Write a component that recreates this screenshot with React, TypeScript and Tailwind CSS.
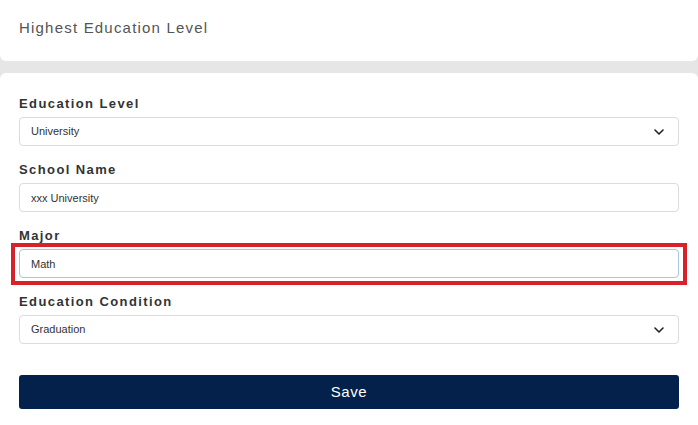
import { useState } from "react";

const levels = ["University", "High School", "Master", "Doctorate"];
const conditions = ["Graduation", "In School", "Dropped Out"];

function Chevron() {
  return (
    <svg width="10" height="6" viewBox="0 0 10 6" className="pointer-events-none absolute right-[15px] top-[12px]">
      <polyline points="1,1 5,5 9,1" fill="none" stroke="#222" strokeWidth="1.6" strokeLinecap="round" strokeLinejoin="round" />
    </svg>
  );
}

function Label({ children }: { children: string }) {
  return <div className="mb-[5px] h-4 text-[13px] font-bold leading-4 tracking-[1.4px] text-[#333]">{children}</div>;
}

export default function App() {
  const [level, setLevel] = useState("University");
  const [school, setSchool] = useState("xxx University");
  const [major, setMajor] = useState("Math");
  const [condition, setCondition] = useState("Graduation");

  const fieldCls =
    "h-[29px] w-full rounded-[4px] border border-[#dcdcdc] bg-white pl-[11px] text-[11px] text-[#333] outline-none";

  return (
    <div className="min-h-[425px] bg-[#e6e6e6] font-['Liberation_Sans',Arial,sans-serif]">
      <div className="h-[61px] rounded-b-[6px] bg-white pl-[19px] pt-[19px]">
        <h1 className="text-[15px] leading-[17px] tracking-[1.2px] text-[#555]">Highest Education Level</h1>
      </div>

      <div className="mt-[12px] min-h-[352px] rounded-t-[6px] bg-white px-[19px] pt-[23px]">
        <div className="mb-[16px]">
          <Label>Education Level</Label>
          <div className="relative">
            <select value={level} onChange={(e) => setLevel(e.target.value)} className={fieldCls + " appearance-none"}>
              {levels.map((l) => (
                <option key={l}>{l}</option>
              ))}
            </select>
            <Chevron />
          </div>
        </div>

        <div className="mb-[16px]">
          <Label>School Name</Label>
          <input value={school} onChange={(e) => setSchool(e.target.value)} className={fieldCls} />
        </div>

        <div className="mb-[16px]">
          <Label>Major</Label>
          <div className="relative">
            <input
              value={major}
              onChange={(e) => setMajor(e.target.value)}
              className="h-[29px] w-full rounded-[4px] border border-[#a9c6e3] bg-white pl-[11px] text-[11px] text-[#333] outline-none"
            />
            {/* highlight annotation */}
            <div className="pointer-events-none absolute -bottom-[7px] -left-[8px] -right-[8px] -top-[6px] border-4 border-[#d7222a]" />
          </div>
        </div>

        <div>
          <Label>Education Condition</Label>
          <div className="relative">
            <select value={condition} onChange={(e) => setCondition(e.target.value)} className={fieldCls + " appearance-none"}>
              {conditions.map((c) => (
                <option key={c}>{c}</option>
              ))}
            </select>
            <Chevron />
          </div>
        </div>

        <button className="mt-[31px] h-[34px] w-full rounded-[3px] bg-[#03214a] text-[15px] tracking-[0.6px] text-white">
          Save
        </button>
      </div>
    </div>
  );
}
